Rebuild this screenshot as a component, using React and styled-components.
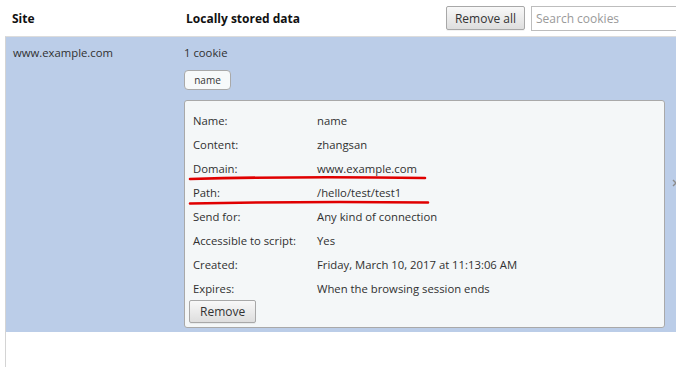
import React from 'react';
import styled, { createGlobalStyle } from 'styled-components';

const GlobalStyle = createGlobalStyle`
  html, body {
    margin: 0;
    padding: 0;
    background: #ffffff;
  }
  body {
    width: 676px;
    height: 367px;
    overflow: hidden;
  }
`;

const Page = styled.div`
  position: relative;
  width: 676px;
  height: 367px;
  overflow: hidden;
  font-family: "Open Sans", "Noto Sans", sans-serif;
  font-size: 11.3px;
  color: #303030;
  display: flex;
  flex-direction: column;
`;

const Header = styled.div`
  height: 36px;
  display: flex;
  align-items: center;
  padding-left: 12px;
  box-sizing: border-box;
`;

const HeaderCell = styled.div`
  width: ${(p) => p.width}px;
  font-weight: 700;
  font-size: 12px;
  color: #111;
`;

const HeaderTools = styled.div`
  flex: 1;
  display: flex;
  align-items: center;
  justify-content: flex-end;
  gap: 6px;
  margin-right: -25px;
`;

const Button = styled.button`
  font-family: inherit;
  font-size: 12px;
  color: #333;
  height: ${(p) => p.height || 24}px;
  padding: 0 ${(p) => p.pad || 8}px;
  border: 1px solid #a8a8a8;
  border-radius: 2px;
  background: linear-gradient(#f8f8f8, #dedede);
  box-shadow: 0 1px 0 rgba(0, 0, 0, 0.05);
  cursor: pointer;
`;

const SearchInput = styled.input`
  font-family: inherit;
  font-size: 12px;
  width: 170px;
  height: 25px;
  box-sizing: border-box;
  border: 1px solid #bdbdbd;
  padding: 0 4px;
  &::placeholder {
    color: #9a9a9a;
  }
`;

const List = styled.div`
  flex: 1;
  margin-left: 5px;
  border-left: 1px solid #d4d4d4;
  border-top: 1px solid #dcdcdc;
`;

const SiteRow = styled.div`
  position: relative;
  background: #bbcde8;
  display: grid;
  grid-template-columns: 178px 1fr;
  padding: 8px 11px 4px 0;
`;

const SiteName = styled.div`
  padding-left: 7px;
  line-height: 15px;
`;

const SiteData = styled.div`
  display: flex;
  flex-direction: column;
  align-items: flex-start;
`;

const Count = styled.div`
  line-height: 15px;
`;

const Chip = styled.div`
  margin-top: 10px;
  height: 20px;
  box-sizing: border-box;
  width: 47px;
  border: 1px solid #a9a9a9;
  border-radius: 4px;
  background: #f7f9fa;
  display: flex;
  align-items: center;
  justify-content: center;
  font-size: 10px;
  color: #333;
`;

const Card = styled.div`
  margin-top: 10px;
  align-self: stretch;
  border: 1px solid #a9a9a9;
  border-radius: 3px;
  background: #f4f7f8;
  padding: 7px 4px 4px 4px;
`;

const Fields = styled.div`
  display: grid;
  grid-template-columns: 124px 1fr;
  grid-auto-rows: 24px;
  align-items: center;
  padding-left: 4px;
`;

const Label = styled.div``;

const Value = styled.div``;

const DeleteIcon = styled.svg`
  position: absolute;
  right: -4px;
  top: 142px;
`;

const Marks = styled.svg`
  position: absolute;
  left: 0;
  top: 0;
  pointer-events: none;
`;

const fields = [
  ['Name:', 'name'],
  ['Content:', 'zhangsan'],
  ['Domain:', 'www.example.com'],
  ['Path:', '/hello/test/test1'],
  ['Send for:', 'Any kind of connection'],
  ['Accessible to script:', 'Yes'],
  ['Created:', 'Friday, March 10, 2017 at 11:13:06 AM'],
  ['Expires:', 'When the browsing session ends'],
];

export default function App() {
  return (
    <Page>
      <GlobalStyle />
      <Header>
        <HeaderCell width={174}>Site</HeaderCell>
        <HeaderCell width={200}>Locally stored data</HeaderCell>
        <HeaderTools>
          <Button>Remove all</Button>
          <SearchInput placeholder="Search cookies" />
        </HeaderTools>
      </Header>
      <List>
        <SiteRow>
          <SiteName>www.example.com</SiteName>
          <SiteData>
            <Count>1 cookie</Count>
            <Chip>name</Chip>
            <Card>
              <Fields>
                {fields.map(([label, value]) => (
                  <React.Fragment key={label}>
                    <Label>{label}</Label>
                    <Value>{value}</Value>
                  </React.Fragment>
                ))}
              </Fields>
              <Button height={23} pad={10}>Remove</Button>
            </Card>
          </SiteData>
          <DeleteIcon width="8" height="8" viewBox="0 0 8 8">
            <path d="M1 1 L7 7 M7 1 L1 7" stroke="#8c8c8c" strokeWidth="1.4" />
          </DeleteIcon>
        </SiteRow>
      </List>
      <Marks width="676" height="367">
        <path d="M190 179 Q 300 176 425 178" stroke="#e00000" strokeWidth="2.6" fill="none" strokeLinecap="round" />
        <path d="M190 203.5 Q 310 201 428 202.5" stroke="#e00000" strokeWidth="2.6" fill="none" strokeLinecap="round" />
      </Marks>
    </Page>
  );
}
